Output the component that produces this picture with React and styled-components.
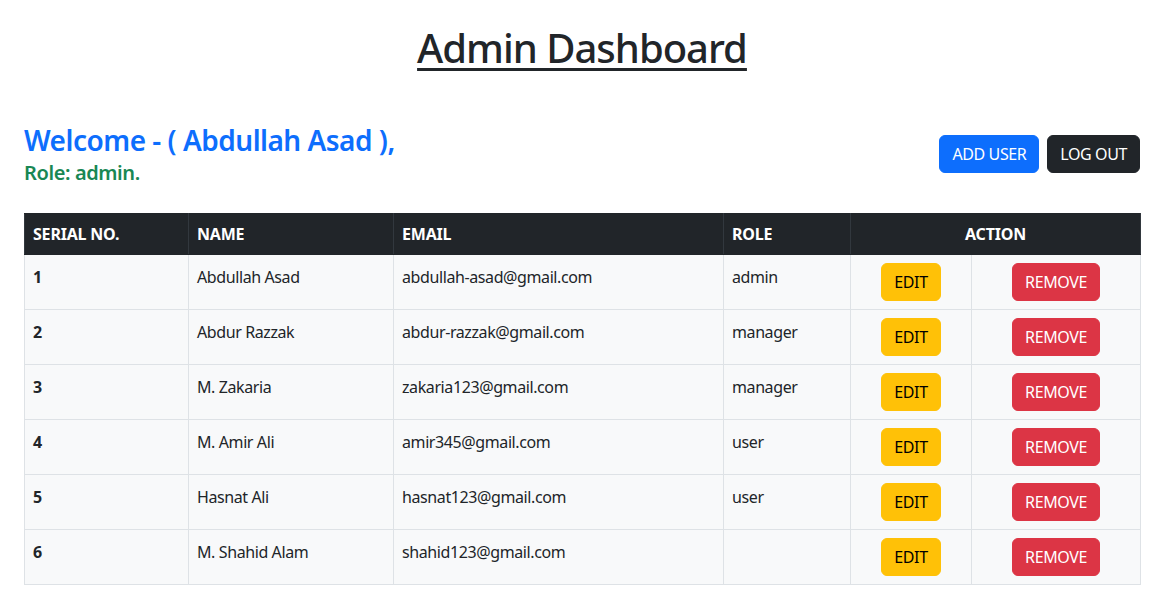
import React from 'react';
import styled, { createGlobalStyle } from 'styled-components';

const textColor = '#212529';
const borderColor = '#dee2e6';

const GlobalStyle = createGlobalStyle`
  body {
    margin: 0;
    background: #fff;
    color: ${textColor};
    font-family: "Noto Sans", "Open Sans", sans-serif;
    font-size: 16px;
    line-height: 1.5;
    letter-spacing: -0.4px;
  }
`

const Page = styled.div`
  padding: 24px 30px 16px 24px;
`

const Title = styled.h1`
  margin: 0 0 52px 0;
  text-align: center;
  font-size: 40px;
  font-weight: 500;
  line-height: 1.2;
  letter-spacing: -1px;
  text-decoration: underline;
  text-decoration-thickness: 3px;
  text-underline-offset: 5px;
`

const TopBar = styled.div`
  display: flex;
  align-items: center;
  justify-content: space-between;
  margin-bottom: 28px;
`

const Welcome = styled.h3`
  margin: 0;
  font-size: 28px;
  font-weight: 600;
  line-height: 1.2;
  letter-spacing: -0.5px;
  color: #0d6efd;
`

const RoleText = styled.h5`
  margin: 3px 0 0 0;
  font-size: 20px;
  font-weight: 600;
  line-height: 1.2;
  color: #198754;
`

const Actions = styled.div`
  display: flex;
  gap: 8px;
`

const Button = styled.button`
  font-family: inherit;
  font-size: 16px;
  line-height: 1.5;
  letter-spacing: -0.4px;
  padding: 6px 12px;
  border: 1px solid ${props => props.bg};
  border-radius: 6px;
  background: ${props => props.bg};
  color: ${props => props.fg};
  text-transform: uppercase;
  cursor: pointer;
`

const Table = styled.table`
  width: 100%;
  table-layout: fixed;
  border-collapse: collapse;
  background: #f8f9fa;
`

const HeadCell = styled.th`
  background: #212529;
  color: #fff;
  text-align: ${props => props.center ? 'center' : 'left'};
  font-weight: 700;
  font-size: 16px;
  letter-spacing: -0.2px;
  padding: 8px 8px;
  border: 1px solid #32383e;
  border-top-color: #212529;
  border-bottom-color: #212529;
`

const Cell = styled.td`
  padding: ${props => props.action ? '8px 8px' : '10px 8px 6px'};
  border: 1px solid ${borderColor};
  vertical-align: top;
  text-align: ${props => props.action ? 'center' : 'left'};
  font-weight: ${props => props.bold ? 700 : 400};
  height: 38px;
`

const users = [
  { name: 'Abdullah Asad', email: 'abdullah-asad@gmail.com', role: 'admin' },
  { name: 'Abdur Razzak', email: 'abdur-razzak@gmail.com', role: 'manager' },
  { name: 'M. Zakaria', email: 'zakaria123@gmail.com', role: 'manager' },
  { name: 'M. Amir Ali', email: 'amir345@gmail.com', role: 'user' },
  { name: 'Hasnat Ali', email: 'hasnat123@gmail.com', role: 'user' },
  { name: 'M. Shahid Alam', email: 'shahid123@gmail.com', role: '' },
];

export default function App() {
  return (
    <Page>
      <GlobalStyle />
      <Title>Admin Dashboard</Title>
      <TopBar>
        <div>
          <Welcome>Welcome - ( Abdullah Asad ),</Welcome>
          <RoleText>Role: admin.</RoleText>
        </div>
        <Actions>
          <Button bg="#0d6efd" fg="#fff">Add User</Button>
          <Button bg="#212529" fg="#fff">Log Out</Button>
        </Actions>
      </TopBar>
      <Table>
        <colgroup>
          <col style={{ width: '164px' }} />
          <col style={{ width: '205px' }} />
          <col style={{ width: '330px' }} />
          <col style={{ width: '127px' }} />
          <col style={{ width: '121px' }} />
          <col style={{ width: '169px' }} />
        </colgroup>
        <thead>
          <tr>
            <HeadCell>SERIAL NO.</HeadCell>
            <HeadCell>NAME</HeadCell>
            <HeadCell>EMAIL</HeadCell>
            <HeadCell>ROLE</HeadCell>
            <HeadCell center colSpan={2}>ACTION</HeadCell>
          </tr>
        </thead>
        <tbody>
          {users.map((u, i) => (
            <tr key={i}>
              <Cell bold>{i + 1}</Cell>
              <Cell>{u.name}</Cell>
              <Cell>{u.email}</Cell>
              <Cell>{u.role}</Cell>
              <Cell action>
                <Button bg="#ffc107" fg="#000">Edit</Button>
              </Cell>
              <Cell action>
                <Button bg="#dc3545" fg="#fff">Remove</Button>
              </Cell>
            </tr>
          ))}
        </tbody>
      </Table>
    </Page>
  );
}
